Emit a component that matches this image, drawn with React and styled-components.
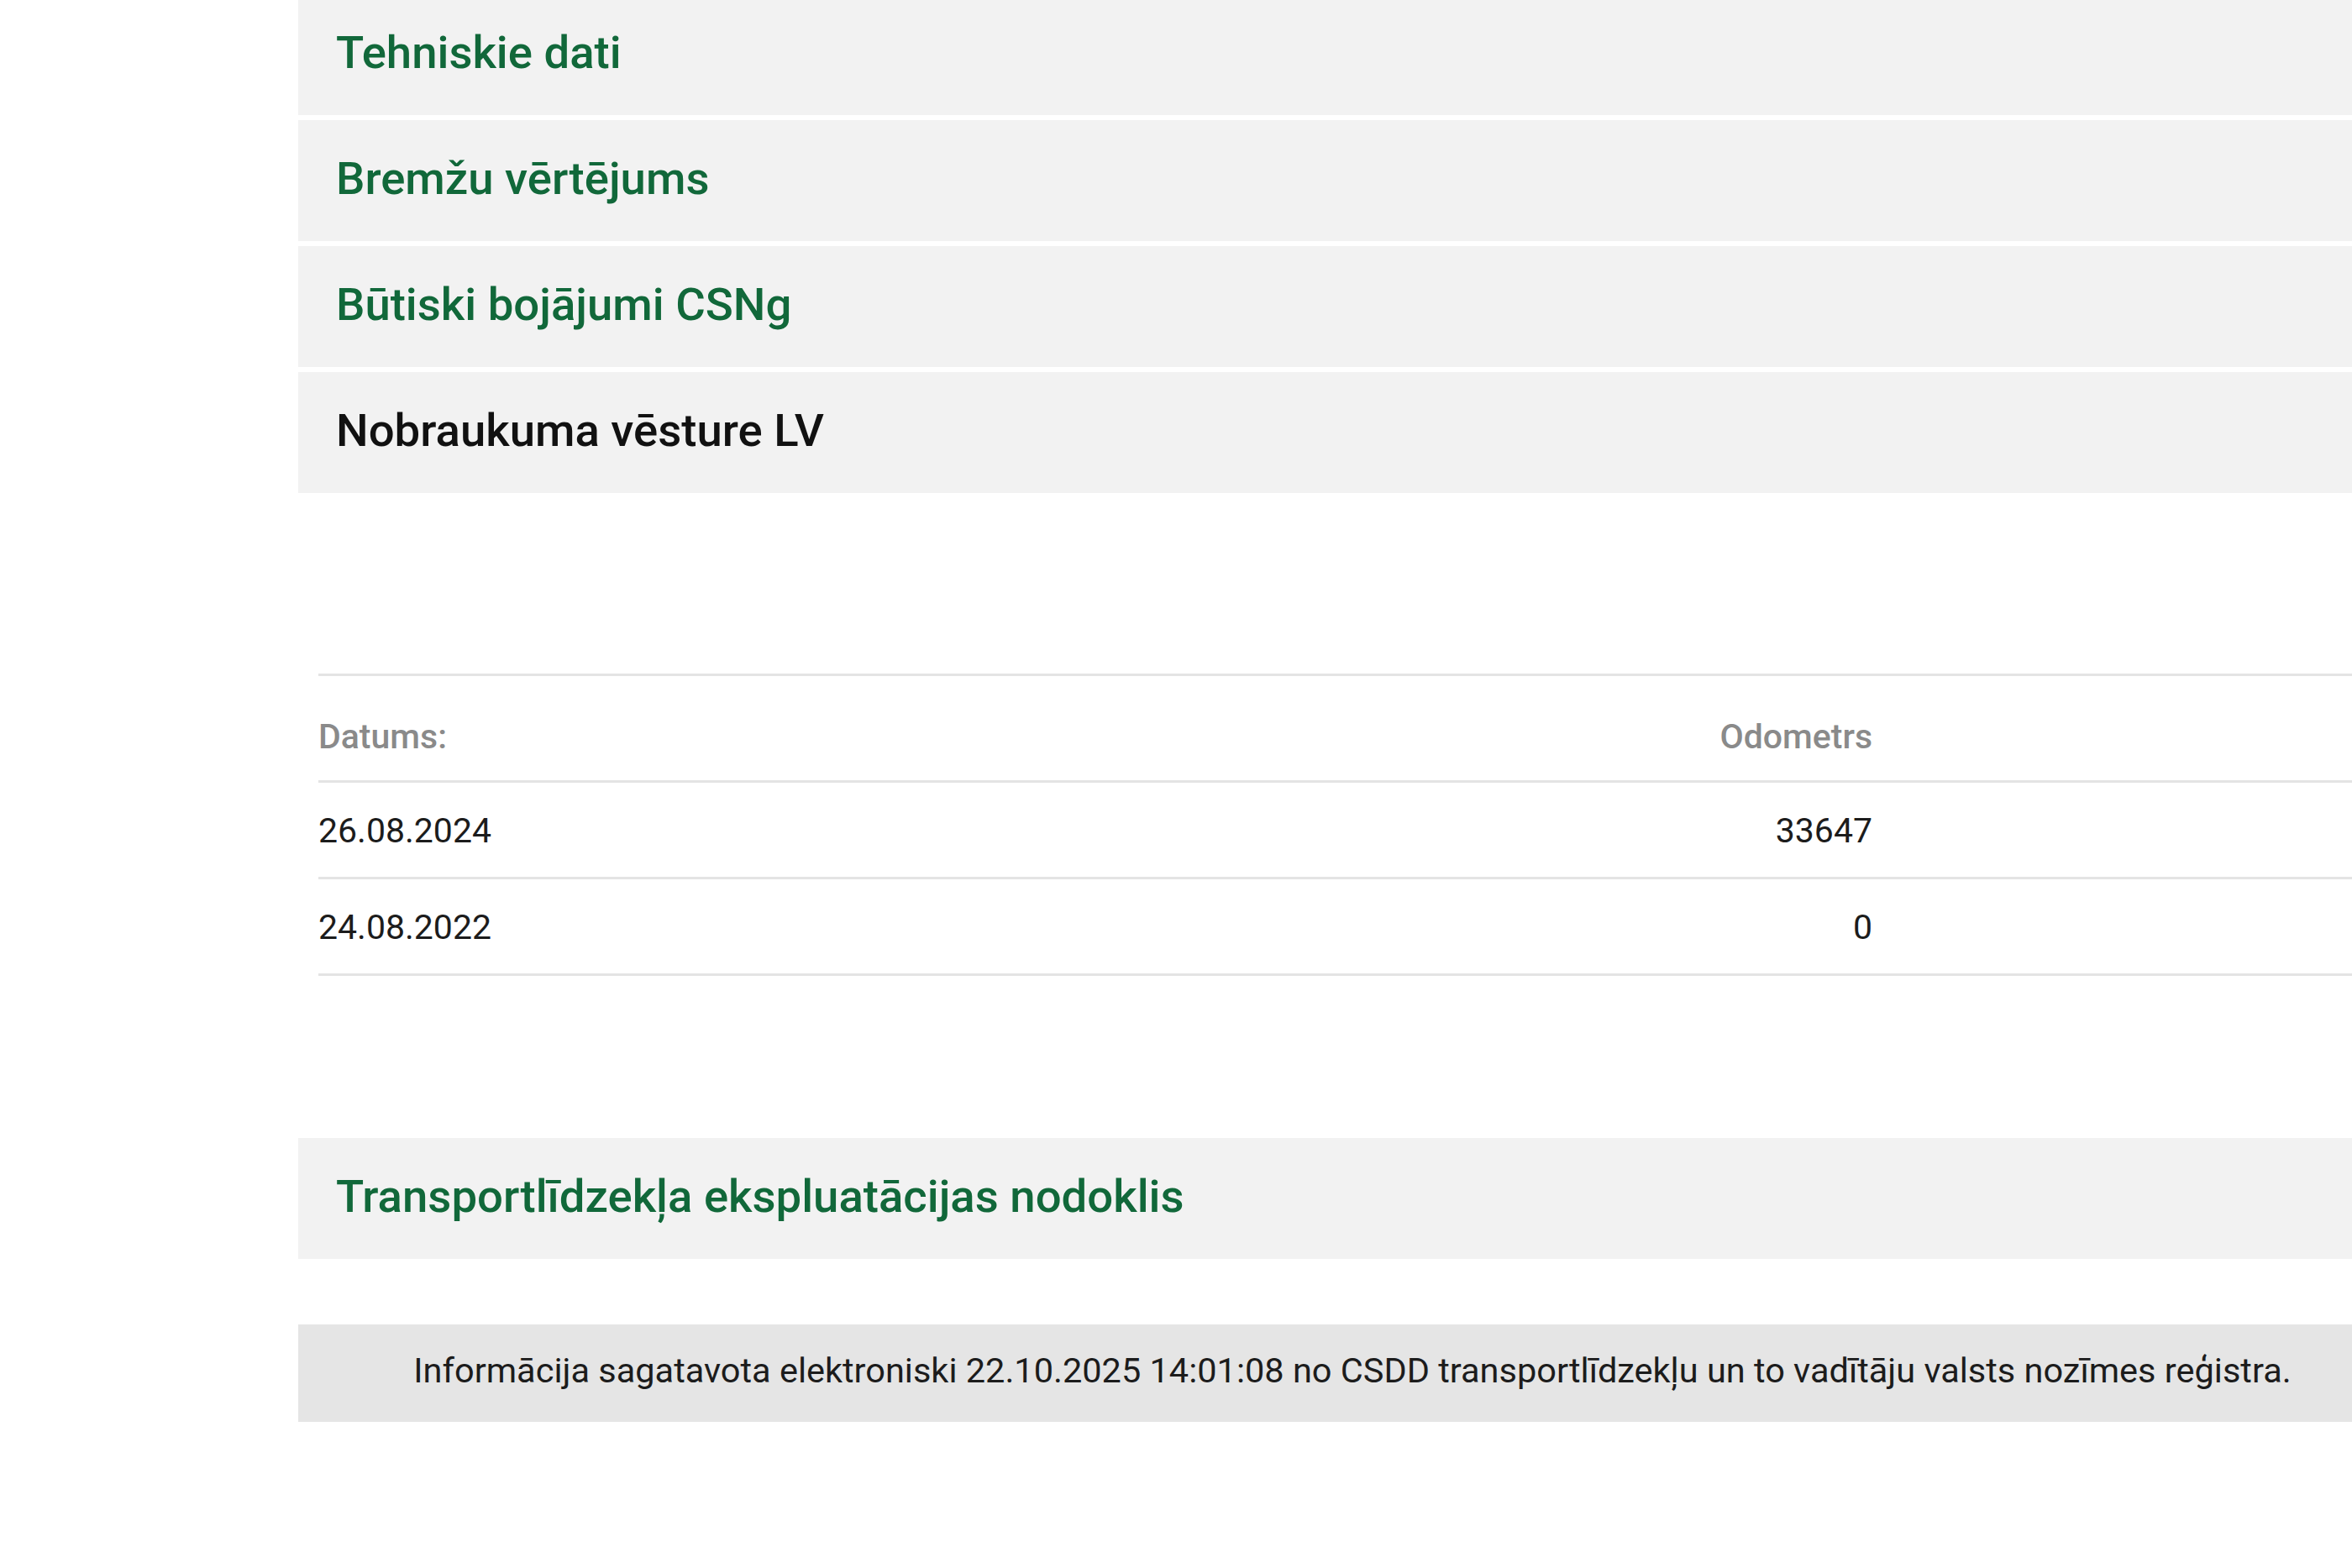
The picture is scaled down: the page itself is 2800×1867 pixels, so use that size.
import React from "react";
import styled, { createGlobalStyle } from "styled-components";

const GlobalStyle = createGlobalStyle`
  html, body {
    margin: 0;
    padding: 0;
    background: #ffffff;
    overflow: hidden;
  }
  body {
    font-family: Roboto, "Liberation Sans", Arial, sans-serif;
    color: #212121;
  }
`;

const sections = ["Tehniskie dati", "Bremžu vērtējums", "Būtiski bojājumi CSNg"];

const mileage = [
  { date: "26.08.2024", km: "33647" },
  { date: "24.08.2022", km: "0" },
];

function App() {
  return (
    <>
      <GlobalStyle />
      <Page>
        <Content>
          <AccordionList>
            {sections.map((title) => (
              <AccordionHeader key={title}>
                <HeaderTitle>{title}</HeaderTitle>
              </AccordionHeader>
            ))}
            <AccordionHeader>
              <HeaderTitle $active>Nobraukuma vēsture LV</HeaderTitle>
            </AccordionHeader>
          </AccordionList>

          <MileageTable>
            <TableRow $head>
              <HeadCell>Datums:</HeadCell>
              <HeadCell $right>Odometrs</HeadCell>
              <span />
            </TableRow>
            {mileage.map((row) => (
              <TableRow key={row.date}>
                <Cell>{row.date}</Cell>
                <Cell $right>{row.km}</Cell>
                <span />
              </TableRow>
            ))}
          </MileageTable>

          <TaxSection>
            <AccordionHeader>
              <HeaderTitle>Transportlīdzekļa ekspluatācijas nodoklis</HeaderTitle>
            </AccordionHeader>
          </TaxSection>

          <InfoBar>
            Informācija sagatavota elektroniski 22.10.2025 14:01:08 no CSDD
            transportlīdzekļu un to vadītāju valsts nozīmes reģistra.
          </InfoBar>
        </Content>
      </Page>
    </>
  );
}

export default App;

const Page = styled.div`
  display: flex;
  padding-left: 355px;
  margin-top: -7px;
  width: 2800px;
  box-sizing: border-box;
  overflow: hidden;
`;

const Content = styled.div`
  flex-shrink: 0;
  width: 2510px;
  display: flex;
  flex-direction: column;
`;

const AccordionList = styled.div`
  display: flex;
  flex-direction: column;
  gap: 6px;
`;

const AccordionHeader = styled.div`
  height: 144px;
  background: #f2f2f2;
  display: flex;
  align-items: center;
  padding-left: 45px;
  padding-bottom: 7px;
  box-sizing: border-box;
`;

const HeaderTitle = styled.h3`
  margin: 0;
  font-size: 54.5px;
  font-weight: 500;
  color: ${(p) => (p.$active ? "#111111" : "#11683a")};
`;

const MileageTable = styled.div`
  margin-top: 215px;
  margin-left: 24px;
  border-top: 3px solid #e4e4e4;
`;

const TableRow = styled.div`
  display: grid;
  grid-template-columns: 1300px 550px 1fr;
  height: ${(p) => (p.$head ? "127px" : "115px")};
  align-items: center;
  border-bottom: 3px solid #e4e4e4;
  padding-top: ${(p) => (p.$head ? "20px" : "2px")};
  box-sizing: border-box;
`;

const Cell = styled.div`
  font-size: 41px;
  color: #1c1c1c;
  text-align: ${(p) => (p.$right ? "right" : "left")};
`;

const HeadCell = styled(Cell)`
  font-weight: 500;
  color: #8a8a8a;
`;

const TaxSection = styled.div`
  margin-top: 193px;
`;

const InfoBar = styled.div`
  margin-top: 78px;
  height: 116px;
  background: #e5e5e5;
  display: flex;
  align-items: center;
  justify-content: center;
  font-size: 41.5px;
  color: #1c1c1c;
  padding-bottom: 8px;
  box-sizing: border-box;
`;
